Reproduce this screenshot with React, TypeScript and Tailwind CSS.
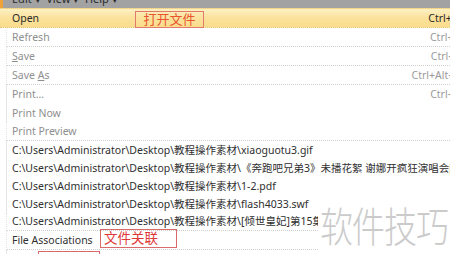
import React from "react";

type RowProps = {
  label: React.ReactNode;
  shortcut?: string;
  h: number;
  disabled?: boolean;
  sep?: boolean;
};

const hClass: Record<number, string> = {
  16: "h-[16px]",
  17: "h-[17px]",
  18: "h-[18px]",
  19: "h-[19px]",
  20: "h-[20px]",
};

function Row({ label, shortcut, h, disabled, sep }: RowProps) {
  return (
    <div
      className={`ml-[6px] border-l border-[#e4e4e4] flex items-center justify-between pl-[5px] pr-[10px] whitespace-nowrap ${hClass[h]} ${
        sep ? "border-b border-b-[#cfcfcf] border-dotted" : ""
      } ${disabled ? "text-[#8f8f8f]" : "text-[#2f2f2f]"}`}
    >
      <span>{label}</span>
      {shortcut ? <span className={disabled ? "text-[#9a9a9a]" : "text-[#333]"}>{shortcut}</span> : null}
    </div>
  );
}

export default function App() {
  const base = "C:\\Users\\Administrator\\Desktop\\教程操作素材\\";
  return (
    <div
      className="relative w-[450px] h-[254px] overflow-hidden bg-white text-[10.5px] leading-none"
      style={{ fontFamily: '"Noto Sans", "Noto Sans CJK SC", sans-serif' }}
    >
      {/* top menubar remnant */}
      <div className="relative h-[8px] bg-[#a2a2a2] overflow-hidden">
        <div className="absolute left-0 top-0 w-[3px] h-[8px] bg-[#f0a23a]" />
        <div className="absolute left-[12px] top-[-7px] text-[11px] leading-[11px] text-[#2a2a2a] whitespace-nowrap">
          Edit ▾&nbsp; View ▾&nbsp; Help ▾
        </div>
      </div>

      <div className="w-[470px]">
        {/* highlighted Open row */}
        <div className="h-[20px] flex items-center justify-between pl-[12px] pr-[10px] border-t border-t-[#eccf84] border-b border-dotted border-b-[#e0c36c] bg-gradient-to-b from-[#fdf0c2] via-[#fbe29c] to-[#f9dc8c] text-[#2a2a2a]">
          <span>Open</span>
          <span>Ctrl+O</span>
        </div>
        <Row label="Refresh" shortcut="Ctrl+R" h={19} disabled sep />
        <Row label={<><span className="underline">S</span>ave</>} shortcut="Ctrl+S" h={19} disabled sep />
        <Row label={<>Save <span className="underline">A</span>s</>} shortcut="Ctrl+Alt+S" h={19} disabled sep />
        <Row label="Print..." shortcut="Ctrl+P" h={19} disabled />
        <Row label="Print Now" h={18} disabled />
        <Row label="Print Preview" h={19} disabled sep />
        <Row label={base + "xiaoguotu3.gif"} h={18} />
        <Row label={base + "《奔跑吧兄弟3》未播花絮 谢娜开疯狂演唱会[高清].qsv"} h={18} />
        <Row label={base + "1-2.pdf"} h={18} />
        <Row label={base + "flash4033.swf"} h={18} />
        <Row label={base + "[倾世皇妃]第15集_1_0.flv"} h={18} sep />
        <Row label="File Associations" h={19} sep />
        <Row label="Exit" h={19} />
      </div>

      {/* annotations */}
      <div className="absolute left-[135px] top-[11px] w-[69px] h-[17px] border border-[#e07a6a] flex items-center justify-center text-[13px] leading-none text-[#e8552f]">
        打开文件
      </div>
      <div className="absolute left-[100px] top-[229px] w-[77px] h-[19px] border border-[#d86a6a] flex items-center pl-[3px] text-[13.5px] leading-none text-[#e03838]">
        文件关联
      </div>
      <div className="absolute left-[38px] top-[251px] w-[62px] h-[20px] border border-[#d86a6a]" />

      {/* watermark */}
      <div className="absolute left-[318px] top-[211px] w-[132px] h-[43px] bg-white" />
      <div className="absolute left-[318px] top-[203px] w-[132px] h-[46px] flex items-center justify-center">
        <span className="text-[33px] font-light leading-none text-[#cbcbcb] tracking-[-1px] scale-y-[1.25]">软件技巧</span>
      </div>
    </div>
  );
}
